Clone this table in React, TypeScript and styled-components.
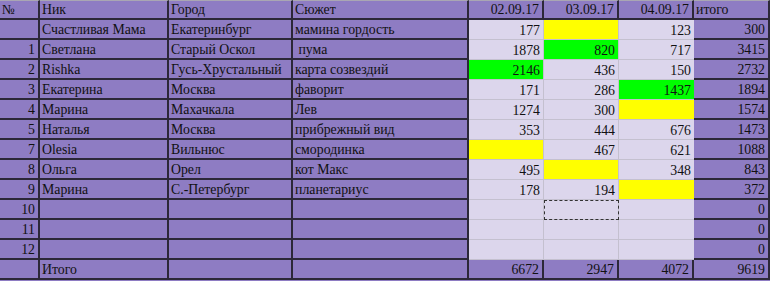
import styled, { createGlobalStyle } from "styled-components";

const Global = createGlobalStyle`
	html, body {
		margin: 0;
		padding: 0;
		background: #8e7cc3;
	}
	body {
		font-family: "Liberation Serif", "Times New Roman", serif;
		color: #111;
		overflow: hidden;
	}
`;

type Tone = "purple" | "light" | "green" | "yellow";
type Line = "dark" | "soft" | "none";

const fills: Record<Tone, string> = {
	purple: "#8e7cc3",
	light: "#dcd6ec",
	green: "#00ff00",
	yellow: "#ffff00",
};

const rules: Record<Line, string> = {
	dark: "2px solid #2c2838",
	soft: "1px solid #c4c0cf",
	none: "0",
};

const Sheet = styled.table`
	width: 770px;
	table-layout: fixed;
	border-collapse: separate;
	border-spacing: 0;
	font-size: 13.8px;
	line-height: 15px;
`;

const Row = styled.tr`
	height: 20px;
`;

const Cell = styled.td<{ $tone?: Tone; $right?: boolean; $side?: Line; $floor?: Line; $picked?: boolean }>`
	box-sizing: border-box;
	height: 20px;
	padding: 0 3px 1px 2px;
	white-space: pre;
	overflow: hidden;
	vertical-align: bottom;
	text-align: ${p => (p.$right ? "right" : "left")};
	background: ${p => fills[p.$tone ?? "purple"]};
	border-right: ${p => rules[p.$side ?? "dark"]};
	border-bottom: ${p => rules[p.$floor ?? "dark"]};
	outline: ${p => (p.$picked ? "1px dashed #333" : "none")};
	outline-offset: -1px;
`;

const HeadCell = styled(Cell)`
	border-top: 1px solid #a9a6b3;
`;

const widths = [40, 129, 124, 176, 75, 75, 75, 76];

type Entry = { v: string; t?: Tone };
type Entrant = { no: string; nick: string; city: string; plot: string; days: Entry[]; total: string };

const n = (v: string, t?: Tone): Entry => ({ v, t });

const entrants: Entrant[] = [
	{ no: "", nick: "Счастливая Мама", city: "Екатеринбург", plot: "мамина гордость", days: [n("177"), n("", "yellow"), n("123")], total: "300" },
	{ no: "1", nick: "Светлана", city: "Старый Оскол", plot: " пума", days: [n("1878"), n("820", "green"), n("717")], total: "3415" },
	{ no: "2", nick: "Rishka", city: "Гусь-Хрустальный", plot: "карта созвездий", days: [n("2146", "green"), n("436"), n("150")], total: "2732" },
	{ no: "3", nick: "Екатерина", city: "Москва", plot: "фаворит", days: [n("171"), n("286"), n("1437", "green")], total: "1894" },
	{ no: "4", nick: "Марина", city: "Махачкала", plot: "Лев", days: [n("1274"), n("300"), n("", "yellow")], total: "1574" },
	{ no: "5", nick: "Наталья", city: "Москва", plot: "прибрежный вид", days: [n("353"), n("444"), n("676")], total: "1473" },
	{ no: "7", nick: "Olesia", city: "Вильнюс", plot: "смородинка", days: [n("", "yellow"), n("467"), n("621")], total: "1088" },
	{ no: "8", nick: "Ольга", city: "Орел", plot: "кот Макс", days: [n("495"), n("", "yellow"), n("348")], total: "843" },
	{ no: "9", nick: "Марина", city: "С.-Петербург", plot: "планетариус", days: [n("178"), n("194"), n("", "yellow")], total: "372" },
	{ no: "10", nick: "", city: "", plot: "", days: [n(""), n(""), n("")], total: "0" },
	{ no: "11", nick: "", city: "", plot: "", days: [n(""), n(""), n("")], total: "0" },
	{ no: "12", nick: "", city: "", plot: "", days: [n(""), n(""), n("")], total: "0" },
];

export default function App() {
	return (
		<>
			<Global />
			<Sheet>
				<colgroup>
					{widths.map((w, i) => (
						<col key={i} style={{ width: w }} />
					))}
				</colgroup>
				<tbody>
					<Row>
						<HeadCell>№</HeadCell>
						<HeadCell>Ник</HeadCell>
						<HeadCell>Город</HeadCell>
						<HeadCell>Сюжет</HeadCell>
						<HeadCell $right>02.09.17</HeadCell>
						<HeadCell $right>03.09.17</HeadCell>
						<HeadCell $right>04.09.17</HeadCell>
						<HeadCell>итого</HeadCell>
					</Row>
					{entrants.map((l, r) => (
						<Row key={r}>
							<Cell $right>{l.no}</Cell>
							<Cell>{l.nick}</Cell>
							<Cell>{l.city}</Cell>
							<Cell>{l.plot}</Cell>
							{l.days.map((d, i) => (
								<Cell
									key={i}
									$right
									$side={i === 2 ? "none" : "soft"}
									$floor="soft"
									$tone={d.t ?? "light"}
									$picked={l.no === "10" && i === 1}
								>
									{d.v}
								</Cell>
							))}
							<Cell $right>{l.total}</Cell>
						</Row>
					))}
					<Row>
						<Cell />
						<Cell>Итого</Cell>
						<Cell />
						<Cell />
						<Cell $right>6672</Cell>
						<Cell $right>2947</Cell>
						<Cell $right>4072</Cell>
						<Cell $right>9619</Cell>
					</Row>
				</tbody>
			</Sheet>
		</>
	);
}
